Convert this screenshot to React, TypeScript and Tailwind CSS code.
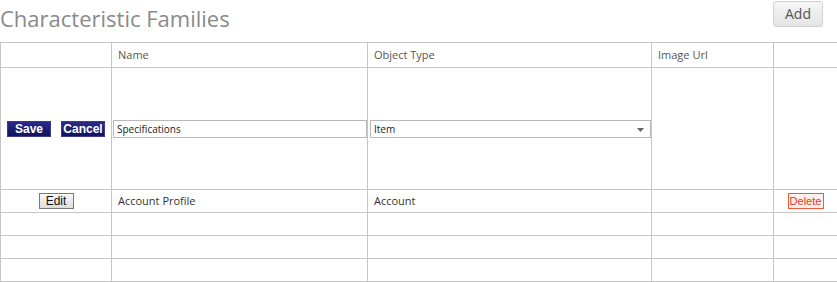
import { useState } from "react";

const font = { fontFamily: '"Open Sans", "Noto Sans", sans-serif' };
const arial = { fontFamily: '"Liberation Sans", Arial, sans-serif' };

export default function App() {
  const [name, setName] = useState("Specifications");
  const [type, setType] = useState("Item");

  const cell = "border border-[#c6c6c6] p-0 align-middle";

  return (
    <div className="w-[837px] h-[282px] bg-white overflow-hidden" style={font}>
      <div className="flex items-start justify-between h-[42px]">
        <h1 className="text-[22px] leading-none text-[#8a8a8a] mt-[7px] ml-0 font-normal">
          Characteristic Families
        </h1>
        <button className="mt-[1px] mr-[14px] w-[50px] h-[26px] rounded-[3px] border border-[#d2d2d2] bg-gradient-to-b from-[#f6f6f6] to-[#e4e4e4] text-[14px] text-[#555] leading-none">
          Add
        </button>
      </div>
      <table className="border-collapse table-fixed w-[837px] text-[11px] text-[#333]">
        <colgroup>
          <col className="w-[111px]" />
          <col className="w-[256px]" />
          <col className="w-[284px]" />
          <col className="w-[122px]" />
          <col className="w-[64px]" />
        </colgroup>
        <thead>
          <tr className="h-[25px] text-left font-normal text-[#555]">
            <th className={cell}></th>
            <th className={`${cell} font-normal pl-[6px]`}>Name</th>
            <th className={`${cell} font-normal pl-[6px]`}>Object Type</th>
            <th className={`${cell} font-normal pl-[6px]`}>Image Url</th>
            <th className={cell}></th>
          </tr>
        </thead>
        <tbody>
          <tr className="h-[122px]">
            <td className={cell}>
              <div className="flex items-center gap-[10px] pl-[6px]" style={arial}>
                <button className="w-[44px] h-[16px] bg-gradient-to-b from-[#2a2a8a] to-[#12125e] border border-[#3a3a8a] text-white text-[12px] font-bold leading-none">
                  Save
                </button>
                <button className="w-[44px] h-[16px] bg-gradient-to-b from-[#2a2a8a] to-[#12125e] border border-[#3a3a8a] text-white text-[12px] font-bold leading-none">
                  Cancel
                </button>
              </div>
            </td>
            <td className={cell}>
              <input
                value={name}
                onChange={(e) => setName(e.target.value)}
                className="block mx-[1px] w-[254px] h-[18px] border border-[#b9b9b9] px-[3px] text-[10px] text-[#222] outline-none"
                style={font}
              />
            </td>
            <td className={cell}>
              <div className="relative ml-[2px] w-[281px] h-[18px] border border-[#b9b9b9] bg-white">
                <select
                  value={type}
                  onChange={(e) => setType(e.target.value)}
                  className="appearance-none w-full h-full bg-transparent px-[3px] text-[10px] text-[#222] outline-none"
                  style={font}
                >
                  <option>Item</option>
                  <option>Account</option>
                </select>
                <svg className="absolute right-[6px] top-[7px] pointer-events-none" width="7" height="4" viewBox="0 0 7 4">
                  <path d="M0 0h7L3.5 4z" fill="#666" />
                </svg>
              </div>
            </td>
            <td className={cell}></td>
            <td className={cell}></td>
          </tr>
          <tr className="h-[23px]">
            <td className={`${cell} text-center`}>
              <button
                className="w-[35px] h-[16px] border border-[#7a7a7a] bg-gradient-to-b from-[#f8f8f8] to-[#dcdcdc] text-[12px] text-[#111] leading-none"
                style={arial}
              >
                Edit
              </button>
            </td>
            <td className={`${cell} pl-[6px]`}>Account Profile</td>
            <td className={`${cell} pl-[6px]`}>Account</td>
            <td className={cell}></td>
            <td className={`${cell} text-center`}>
              <button
                className="w-[36px] h-[16px] px-0 border border-[#f05a3c] bg-[#fff0ec] text-[11px] text-[#e8321e] leading-none"
                style={arial}
              >
                Delete
              </button>
            </td>
          </tr>
          {[0, 1, 2].map((i) => (
            <tr key={i} className="h-[23px]">
              <td className={cell}></td>
              <td className={cell}></td>
              <td className={cell}></td>
              <td className={cell}></td>
              <td className={cell}></td>
            </tr>
          ))}
        </tbody>
      </table>
    </div>
  );
}
